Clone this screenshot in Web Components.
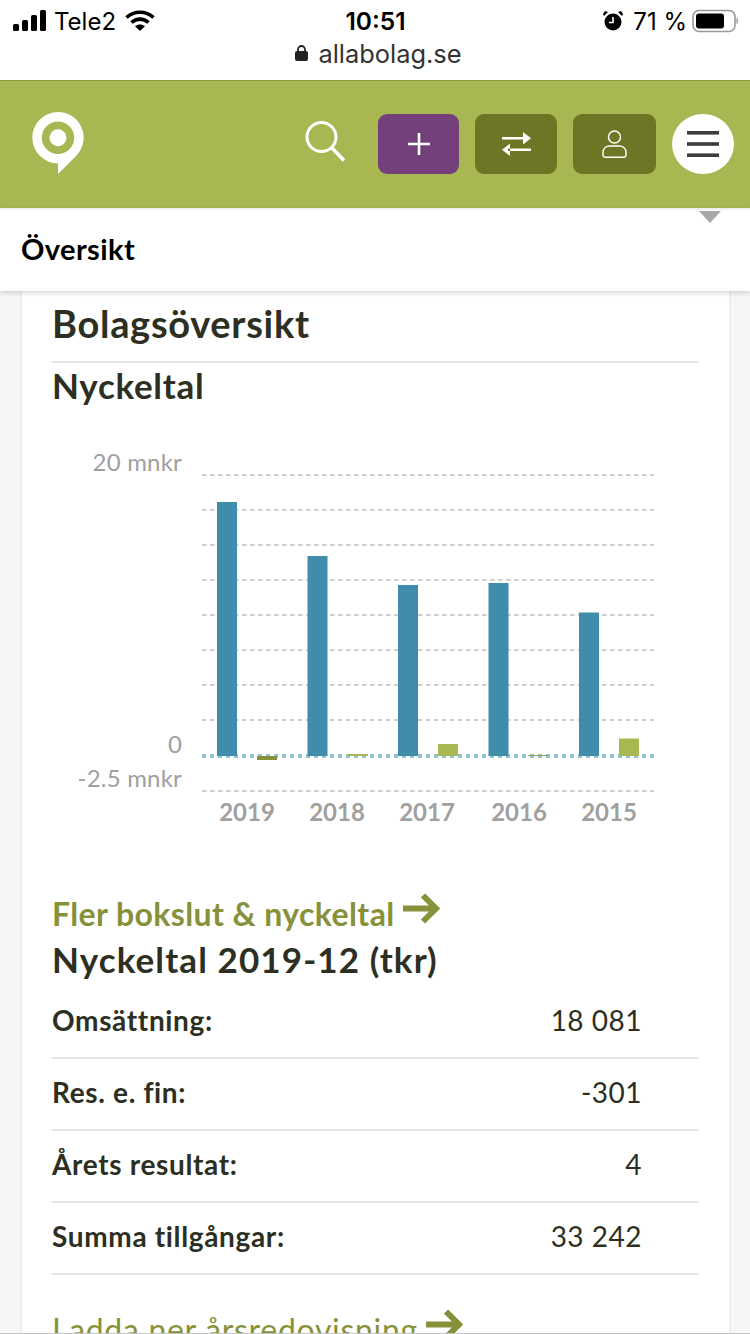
<!DOCTYPE html>
<html lang="sv">
<head>
<meta charset="utf-8">
<title>Bolagsöversikt</title>
<style>
  html, body { margin: 0; padding: 0; }
  body { width: 750px; height: 1334px; overflow: hidden; background: #f6f6f6; font-family: Lato, "Open Sans", sans-serif; color: #2d2f22; }
</style>
</head>
<body>
<status-bar></status-bar>
<app-header></app-header>
<sub-tab>Översikt</sub-tab>
<info-card>
  <h-line size="38" line="60" track="0.7" pad="8" rule>Bolagsöversikt</h-line>
  <h-line size="35" line="44" track="0.7">Nyckeltal</h-line>
  <bar-chart></bar-chart>
  <more-link>Fler bokslut &amp; nyckeltal</more-link>
  <h-line size="35" line="48" track="1.1" pad="4">Nyckeltal 2019-12 (tkr)</h-line>
  <key-row label="Omsättning:" value="18 081"></key-row>
  <key-row label="Res. e. fin:" value="-301"></key-row>
  <key-row label="Årets resultat:" value="4"></key-row>
  <key-row label="Summa tillgångar:" value="33 242"></key-row>
  <more-link light>Ladda ner årsredovisning</more-link>
</info-card>
<browser-edge></browser-edge>

<script>
const Colors = {
    green: '#a9b753',
    greenDark: '#6c7625',
    greenText: '#87913a',
    purple: '#74407c',
    blue: '#408cab',
    ink: '#2d2f22',
    rule: '#e4e4e4',
    gray: '#a0a0a0',
};

class StatusBar extends HTMLElement {
    constructor() {
        super();
        this.attachShadow({ mode: 'open' }).innerHTML = `
      <style>
        :host { display: block; height: 80px; background: #fff; border-bottom: 1px solid #8a9a3c; font-family: Inter, sans-serif; color: #000; }
        .top { display: grid; grid-template-columns: 1fr auto 1fr; align-items: center; height: 42px; padding: 0 12px 0 13px; font-size: 24px; }
        .left, .right { display: flex; align-items: center; }
        .left { gap: 9px; }
        .right { justify-content: flex-end; }
        .pct { margin: 0 5px 0 10px; }
        .time { font-weight: 600; font-size: 24.5px; }
        .url { display: flex; justify-content: center; align-items: center; gap: 10px; height: 22px; padding-left: 7px; font-size: 25.4px; color: #333; }
        svg { display: block; }
      </style>
      <div class="top">
        <div class="left">
          <svg width="33" height="22" viewBox="0 0 33 22"><rect y="14" width="6" height="7" rx="1.5"/><rect x="9" y="10" width="6" height="11" rx="1.5"/><rect x="18" y="5" width="6" height="16" rx="1.5"/><rect x="27" y="0" width="6" height="21" rx="1.5"/></svg>
          <span style="margin-left:-1px">Tele2</span>
          <svg width="30" height="22" viewBox="0 0 30 22" fill="none" stroke="#000" stroke-width="3.6"><path d="M1.5 7.5C9 .5 21 .5 28.500 7.500"/><path d="M6.500 12.500C11.500 8 18.500 8 23.500 12.500"/><path d="M15 21l-5-4.800c3-2.200 7-2.200 10 0z" fill="#000" stroke="none"/></svg>
        </div>
        <div class="time">10:51</div>
        <div class="right">
          <svg width="20" height="22" viewBox="0 0 20 22"><circle cx="10" cy="12" r="8.500"/><path d="M1 6l4-4-3-1-2 3zM19 6l-4-4 3-1 2 3z"/><path d="M10 7v5.500H6" stroke="#fff" stroke-width="1.600" fill="none"/></svg>
          <span class="pct">71 %</span>
          <svg width="46" height="24" viewBox="0 0 46 24"><rect x="1" y="1.500" width="42" height="21" rx="6" fill="none" stroke="#999" stroke-width="1.600"/><rect x="4" y="4.500" width="28" height="15" rx="3"/><path d="M44.500 8.500c2 .5 2 6.500 0 7z" fill="#999"/></svg>
        </div>
      </div>
      <div class="url">
        <svg width="13" height="16" viewBox="0 0 13 16"><path d="M3 7V4.500a3.500 3.500 0 0 1 7 0V7" fill="none" stroke="#222" stroke-width="1.800"/><rect y="6" width="13" height="10" rx="2" fill="#222"/></svg>
        <span>allabolag.se</span>
      </div>`;
    }
}

class AppHeader extends HTMLElement {
    constructor() {
        super();
        this.attachShadow({ mode: 'open' }).innerHTML = `
      <style>
        :host { display: block; }
        .bar { display: flex; align-items: center; height: 127px; padding: 0 16px 0 32px; background: ${Colors.green}; }
        .logo { margin-top: -3px; }
        .search { margin-left: auto; margin-right: 33px; margin-top: -7px; }
        .btn { display: flex; align-items: center; justify-content: center; height: 60px; width: 82px; margin-left: 16px; margin-top: -1px; border-radius: 9px; background: ${Colors.greenDark}; }
        .btn.plus { width: 81px; margin-left: 0; background: ${Colors.purple}; }
        .btn.user { width: 83px; }
        .btn.menu { width: 62px; border-radius: 50%; background: #fff; }
        svg { display: block; }
      </style>
      <div class="bar">
        <svg class="logo" width="52" height="62" viewBox="0 0 52 62"><path fill="#fff" fill-rule="evenodd" d="M26 0a25.700 25.700 0 0 1 18 44L26 62V51.400A25.700 25.700 0 0 1 26 0zm0 9.500a16.200 16.200 0 1 0 0 32.400 16.200 16.200 0 0 0 0-32.400zm0 7.800a8.500 8.500 0 1 1 0 17 8.500 8.500 0 0 1 0-17z"/></svg>
        <svg class="search" width="40" height="41" viewBox="0 0 40 41" fill="none" stroke="#fff" stroke-width="3"><circle cx="16.500" cy="16" r="14.500"/><path d="M27 27l12 12.500" stroke-width="3.600"/></svg>
        <div class="btn plus"><svg width="22" height="22" viewBox="0 0 22 22" stroke="#fff" stroke-width="2.600"><path d="M11 0v22M0 11h22"/></svg></div>
        <div class="btn"><svg width="29" height="24" viewBox="0 0 29 24" fill="#fff"><path d="M0 5h23v2.500H0zM21 0l8 6.300-8 6.200zM6 16.500h23V19H6zM8 11.500L0 17.800 8 24z"/></svg></div>
        <div class="btn user"><svg width="25" height="28" viewBox="0 0 25 28" fill="none" stroke="#fff" stroke-width="1.500"><circle cx="12.500" cy="7" r="6"/><path d="M8 16h9c4 0 7 2.500 7 6.500v2.500c0 1.500-1 2.300-2.500 2.300h-18C2 27.300 1 26.500 1 25v-2.500C1 18.500 4 16 8 16z"/></svg></div>
        <div class="btn menu"><svg width="32" height="26" viewBox="0 0 32 26" fill="#3c3c3c"><rect width="32" height="3.600"/><rect y="11.200" width="32" height="3.600"/><rect y="22.400" width="32" height="3.600"/></svg></div>
      </div>`;
    }
}

class SubTab extends HTMLElement {
    constructor() {
        super();
        this.attachShadow({ mode: 'open' }).innerHTML = `
      <style>
        :host { display: block; position: relative; z-index: 2; height: 81px; background: #fff; border-top: 2px solid #efefef; box-shadow: 0 2px 5px rgba(0,0,0,.16); }
        .label { padding: 22px 0 0 21px; font-size: 29px; line-height: 34px; font-weight: 700; letter-spacing: .4px; color: #000; }
        .caret { position: absolute; top: 1px; right: 29px; width: 0; height: 0; border-top: 12px solid #a8a8a8; border-left: 11px solid transparent; border-right: 11px solid transparent; }
      </style>
      <div class="label"><slot></slot></div>
      <div class="caret"></div>`;
    }
}

class InfoCard extends HTMLElement {
    constructor() {
        super();
        this.attachShadow({ mode: 'open' }).innerHTML = `
      <style>
        :host { display: block; margin: 0 19px 0 20px; padding: 2px 31px 0 30px; background: #fff; border-left: 2px solid #eee; border-right: 2px solid #eee; }
      </style>
      <slot></slot>`;
    }
}

class HLine extends HTMLElement {
    constructor() {
        super();
        const size = this.getAttribute('size');
        const line = this.getAttribute('line');
        const track = this.getAttribute('track') || 0;
        const pad = this.getAttribute('pad') || 0;
        const rule = this.hasAttribute('rule') ? `border-bottom: 2px solid ${Colors.rule};` : '';
        this.attachShadow({ mode: 'open' }).innerHTML = `
      <style>
        :host { display: block; padding-bottom: ${pad}px; font-size: ${size}px; line-height: ${line}px; letter-spacing: ${track}px; font-weight: 700; color: ${Colors.ink}; ${rule} }
      </style>
      <slot></slot>`;
    }
}

class BarChart extends HTMLElement {
    constructor() {
        super();
        const grid = [475, 510, 545, 580, 615, 650, 685, 720, 791];
        const years = [
            { year: 2019, tx: 247, x: 217, top: 502, gx: 257, gy: 756, gh: 4, fill: '#87913a' },
            { year: 2018, tx: 337, x: 307.5, top: 556, gx: 348, gy: 754, gh: 2, fill: Colors.green },
            { year: 2017, tx: 427, x: 398, top: 585, gx: 438, gy: 744, gh: 12, fill: Colors.green },
            { year: 2016, tx: 519, x: 488.5, top: 583, gx: 528, gy: 755, gh: 1, fill: '#a39a5c' },
            { year: 2015, tx: 609, x: 579, top: 612.500, gx: 619, gy: 738.500, gh: 17.500, fill: Colors.green },
        ];
        const lines = grid.map((y) => `<line x1="202" x2="654" y1="${y}" y2="${y}" stroke="#cfcfcf" stroke-width="2" stroke-dasharray="4.500 3.500"/>`).join('');
        const bars = years.map((d) => `
          <rect x="${d.x}" y="${d.top}" width="20" height="${756 - d.top}" fill="${Colors.blue}"/>
          <rect x="${d.gx}" y="${d.gy}" width="20" height="${d.gh}" fill="${d.fill}"/>
          <text class="year" x="${d.tx}" y="821" text-anchor="middle">${d.year}</text>`).join('');
        this.attachShadow({ mode: 'open' }).innerHTML = `
      <style>
        :host { display: block; height: 484px; margin: 0 -52px; }
        svg { display: block; }
        text { font-family: Lato, sans-serif; fill: ${Colors.gray}; font-size: 24px; letter-spacing: .2px; }
        .year { font-weight: 700; letter-spacing: 0; }
      </style>
      <svg width="706" height="484" viewBox="0 407 706 484">
        ${lines}
        <line x1="202" x2="654" y1="756" y2="756" stroke="#92c5d0" stroke-width="4" stroke-dasharray="4 4"/>
        ${bars}
        <text x="182" y="471" text-anchor="end">20 mnkr</text>
        <text x="182" y="753" text-anchor="end">0</text>
        <text x="182" y="787" text-anchor="end">-2.5 mnkr</text>
      </svg>`;
    }
}

class MoreLink extends HTMLElement {
    constructor() {
        super();
        this.attachShadow({ mode: 'open' }).innerHTML = `
      <style>
        :host { display: flex; align-items: center; gap: 8px; height: 44px; font-size: 32px; letter-spacing: .4px; font-weight: 700; color: ${Colors.greenText}; }
        :host([light]) { font-weight: 400; letter-spacing: .7px; margin-top: 32px; }
        svg { display: block; margin-top: -10px; }
      </style>
      <slot></slot>
      <svg width="37" height="31" viewBox="0 0 37 31" fill="none" stroke="${Colors.greenText}" stroke-width="6"><path d="M0 15.500h32M20 2.500l13 13-13 13"/></svg>`;
    }
}

class KeyRow extends HTMLElement {
    constructor() {
        super();
        this.attachShadow({ mode: 'open' }).innerHTML = `
      <style>
        :host { display: flex; justify-content: space-between; align-items: center; height: 66px; padding: 0 56px 4px 0; border-bottom: 2px solid ${Colors.rule}; font-size: 28px; color: ${Colors.ink}; }
        .label { font-weight: 700; letter-spacing: .65px; }
        .value { letter-spacing: .5px; }
      </style>
      <span class="label">${this.getAttribute('label')}</span>
      <span class="value">${this.getAttribute('value')}</span>`;
    }
}

// strip of the browser toolbar that just shows at the bottom of the window
class BrowserEdge extends HTMLElement {
    constructor() {
        super();
        this.attachShadow({ mode: 'open' }).innerHTML = `
      <style>
        :host { display: block; position: fixed; left: 0; right: 0; bottom: 0; height: 1px; background: #c4c4c4; z-index: 3; }
      </style>`;
    }
}

customElements.define('status-bar', StatusBar);
customElements.define('app-header', AppHeader);
customElements.define('sub-tab', SubTab);
customElements.define('info-card', InfoCard);
customElements.define('h-line', HLine);
customElements.define('bar-chart', BarChart);
customElements.define('more-link', MoreLink);
customElements.define('key-row', KeyRow);
customElements.define('browser-edge', BrowserEdge);
</script>
</body>
</html>
